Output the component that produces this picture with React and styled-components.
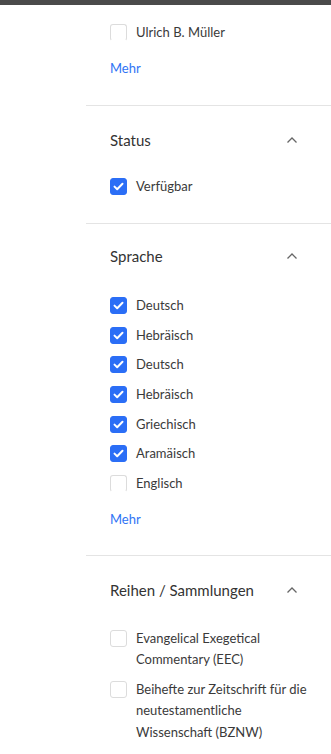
import styled, { createGlobalStyle } from "styled-components";

const GlobalStyle = createGlobalStyle`
  body {
    margin: 0;
    background: #ffffff;
    font-family: "Lato", "Liberation Sans", sans-serif;
    color: #333333;
  }
`;

const TopBar = styled.div`
  height: 5px;
  background-color: #4a4a4a;
`;

const Page = styled.div`
  display: flex;
  min-height: 749px;
`;

const Gutter = styled.div`
  width: 86px;
  flex-shrink: 0;
`;

const Panel = styled.aside`
  flex: 1;
`;

const Section = styled.section`
  padding: ${(p) => p.$top || 34}px 33px ${(p) => p.$bottom || 0}px 24px;
  border-bottom: ${(p) => (p.$last ? "none" : "1px solid #e4e4e4")};
`;

const Header = styled.div`
  display: flex;
  align-items: center;
  justify-content: space-between;
  height: 24px;
  margin-bottom: ${(p) => p.$gap ?? 23}px;
  font-size: 15px;
  color: #333;
`;

const List = styled.ul`
  list-style: none;
  margin: 0 -24px 0 0;
  padding: 0;
  display: flex;
  flex-direction: column;
  gap: ${(p) => p.$gap ?? 8}px;
`;

const Item = styled.li`
  display: flex;
  align-items: flex-start;
  gap: 9px;
  font-size: 13px;
  line-height: 21.5px;
  color: #3a3a3a;
`;

const Box = styled.span`
  flex-shrink: 0;
  width: 17px;
  height: 17px;
  margin-top: 2px;
  box-sizing: border-box;
  border-radius: 3px;
  display: flex;
  align-items: center;
  justify-content: center;
  background-color: ${(p) => (p.$checked ? "#2b6ef6" : "#fff")};
  border: 1px solid ${(p) => (p.$checked ? "#2b6ef6" : "#dcdcdc")};
  border-bottom-color: ${(p) =>
    p.$checked ? "#2b6ef6" : p.$clipped ? "transparent" : "#dcdcdc"};
`;

const Label = styled.span`
  max-width: 176px;
`;

const More = styled.a`
  display: inline-block;
  font-size: 13px;
  color: #2f74f5;
  text-decoration: none;
  margin-top: ${(p) => p.$top ?? 16}px;
`;

const Check = () => (
  <svg width="11" height="9" viewBox="0 0 11 9" fill="none">
    <path
      d="M1.5 4.6 L4.2 7.2 L9.5 1.8"
      stroke="#fff"
      strokeWidth="2"
      strokeLinecap="round"
      strokeLinejoin="round"
    />
  </svg>
);

const Chevron = () => (
  <svg width="12" height="8" viewBox="0 0 12 8" fill="none">
    <path d="M1.5 6.5 L6 2 L10.5 6.5" stroke="#666" strokeWidth="1.3" />
  </svg>
);

function Checkbox({ label, checked, clipped }) {
  return (
    <Item>
      <Box $checked={checked} $clipped={clipped}>
        {checked && <Check />}
      </Box>
      <Label>{label}</Label>
    </Item>
  );
}

const languages = [
  { label: "Deutsch", checked: true },
  { label: "Hebräisch", checked: true },
  { label: "Deutsch", checked: true },
  { label: "Hebräisch", checked: true },
  { label: "Griechisch", checked: true },
  { label: "Aramäisch", checked: true },
  { label: "Englisch", checked: false, clipped: true },
];

export default function App() {
  return (
    <>
      <GlobalStyle />
      <TopBar />
      <Page>
        <Gutter />
        <Panel>
          <Section $top={17} $bottom={29}>
            <List>
              <Checkbox label="Ulrich B. Müller" clipped />
            </List>
            <More href="#" $top={16}>
              Mehr
            </More>
          </Section>

          <Section $top={22} $bottom={26}>
            <Header $gap={24}>
              Status
              <Chevron />
            </Header>
            <List>
              <Checkbox label="Verfügbar" checked />
            </List>
          </Section>

          <Section $top={20} $bottom={28}>
            <Header $gap={27}>
              Sprache
              <Chevron />
            </Header>
            <List $gap={8.2}>
              {languages.map((l, i) => (
                <Checkbox key={i} {...l} />
              ))}
            </List>
            <More href="#" $top={16}>
              Mehr
            </More>
          </Section>

          <Section $top={22} $last>
            <Header $gap={26}>
              Reihen / Sammlungen
              <Chevron />
            </Header>
            <List $gap={8}>
              <Checkbox label="Evangelical Exegetical Commentary (EEC)" />
              <Checkbox label="Beihefte zur Zeitschrift für die neutestamentliche Wissenschaft (BZNW)" />
            </List>
          </Section>
        </Panel>
      </Page>
    </>
  );
}
